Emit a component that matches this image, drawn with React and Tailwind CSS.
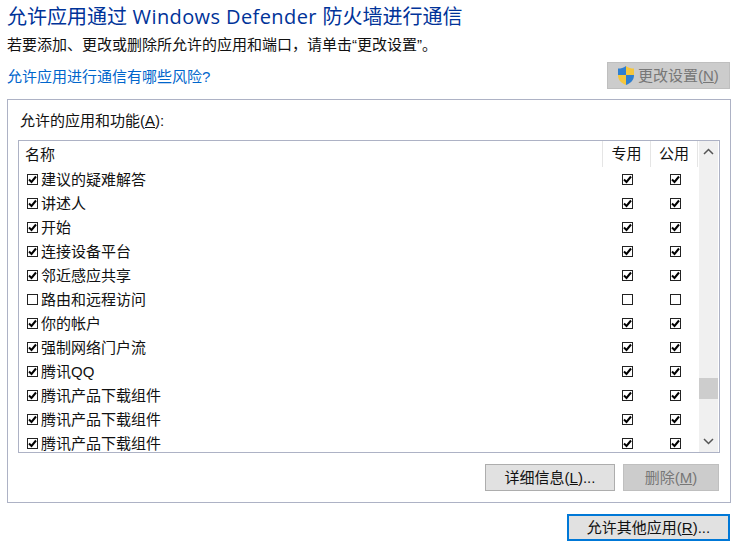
import React from "react";

const rows = [
  { name: "建议的疑难解答", on: true, a: true, b: true },
  { name: "讲述人", on: true, a: true, b: true },
  { name: "开始", on: true, a: true, b: true },
  { name: "连接设备平台", on: true, a: true, b: true },
  { name: "邻近感应共享", on: true, a: true, b: true },
  { name: "路由和远程访问", on: false, a: false, b: false },
  { name: "你的帐户", on: true, a: true, b: true },
  { name: "强制网络门户流", on: true, a: true, b: true },
  { name: "腾讯QQ", on: true, a: true, b: true },
  { name: "腾讯产品下载组件", on: true, a: true, b: true },
  { name: "腾讯产品下载组件", on: true, a: true, b: true },
  { name: "腾讯产品下载组件", on: true, a: true, b: true },
];

const Check = ({ on }) => (
  <span className="flex h-[11px] w-[11px] shrink-0 items-center justify-center border border-[#222] bg-white">
    {on && (
      <svg width="9" height="9" viewBox="0 0 9 9">
        <path d="M1 4.5 L3.5 7 L8 1.5" fill="none" stroke="#000" strokeWidth="2" />
      </svg>
    )}
  </span>
);

const Shield = () => (
  <svg width="18" height="21" viewBox="0 0 18 21" className="shrink-0">
    <path d="M9 1 C6.5 3 4 3.6 1 3.6 L1 10 L9 10 Z" fill="#2f7fd0" />
    <path d="M9 1 C11.5 3 14 3.6 17 3.6 L17 10 L9 10 Z" fill="#f5c63c" />
    <path d="M1 10 C1 15 4 18 9 20 L9 10 Z" fill="#f5c63c" />
    <path d="M17 10 C17 15 14 18 9 20 L9 10 Z" fill="#2f7fd0" />
  </svg>
);

const App = () => {
  return (
    <div className="h-[554px] w-[744px] overflow-hidden bg-white font-['Liberation_Sans','Noto_Sans_CJK_SC',sans-serif] text-[15px] leading-[20px] text-[#111]">
      <div className="px-[7px]">
        <h1 className="pt-[5px] text-[20px] leading-[24px] text-[#003399]">
          允许应用通过 <span className="font-['Open_Sans'] tracking-[0.4px]">Windows Defender</span> 防火墙进行通信
        </h1>
        <p className="mt-[6px] leading-[20px]">若要添加、更改或删除所允许的应用和端口，请单击“更改设置”。</p>

        <div className="mt-[7px] flex items-start justify-between pr-[7px]">
          <a className="mt-[5px] text-[#0066cc]">允许应用进行通信有哪些风险?</a>
          <button className="flex h-[27px] w-[123px] items-center gap-[3px] border border-[#bfbfbf] bg-[#cccccc] pl-[9px] text-[#777]">
            <Shield />
            <span>
              更改设置(<span className="underline">N</span>)
            </span>
          </button>
        </div>

        <div className="mt-[10px] flex h-[404px] w-[724px] flex-col border border-[#adb2c5] px-[10px]">
          <div className="pl-[2px] pt-[11px] leading-[20px]">
            允许的应用和功能(<span className="underline">A</span>):
          </div>

          <div className="mt-[9px] flex h-[313px] w-[702px] overflow-hidden border border-[#adb2c5]">
            <div className="min-w-0 flex-1">
              <div className="flex h-[26px] items-center">
                <div className="flex-1 pl-[6px] pt-[2px]">名称</div>
                <div className="h-full w-[48px] border-l border-[#e5e5e5] text-center leading-[26px]">专用</div>
                <div className="h-full w-[48px] border-x border-[#e5e5e5] text-center leading-[26px]">公用</div>
                <div className="w-[1px]" />
              </div>
              {rows.map((row, i) => (
                <div key={i} className="flex h-[24px] shrink-0 items-center">
                  <div className="flex flex-1 items-center gap-[3px] pl-[8px]">
                    <Check on={row.on} />
                    <span className="pt-[2px]">{row.name}</span>
                  </div>
                  <div className="flex w-[48px] justify-center">
                    <Check on={row.a} />
                  </div>
                  <div className="flex w-[48px] justify-center">
                    <Check on={row.b} />
                  </div>
                </div>
              ))}
            </div>

            <div className="mr-[1px] flex w-[19px] shrink-0 flex-col bg-[#f0f0f0]">
              <div className="flex h-[21px] items-center justify-center">
                <svg width="11" height="7" viewBox="0 0 11 7">
                  <path d="M1 6 L5.5 1.5 L10 6" fill="none" stroke="#555" strokeWidth="1.5" />
                </svg>
              </div>
              <div className="mt-[216px] h-[21px] bg-[#cdcdcd]" />
              <div className="mt-auto flex h-[22px] items-center justify-center">
                <svg width="11" height="7" viewBox="0 0 11 7">
                  <path d="M1 1 L5.5 5.5 L10 1" fill="none" stroke="#555" strokeWidth="1.5" />
                </svg>
              </div>
            </div>
          </div>

          <div className="mt-[11px] flex justify-end gap-[8px] pr-[1px]">
            <button className="h-[27px] w-[130px] border border-[#adadad] bg-[#e1e1e1]">
              详细信息(<span className="underline">L</span>)...
            </button>
            <button className="h-[27px] w-[96px] border border-[#bfbfbf] bg-[#cccccc] text-[#777]">
              删除(<span className="underline">M</span>)
            </button>
          </div>
        </div>

        <div className="mt-[11px] flex justify-end pr-[7px]">
          <button className="h-[27px] w-[163px] border-2 border-[#0078d7] bg-[#e1e1e1] leading-[20px]">
            允许其他应用(<span className="underline">R</span>)...
          </button>
        </div>
      </div>
    </div>
  );
};

export default App;
